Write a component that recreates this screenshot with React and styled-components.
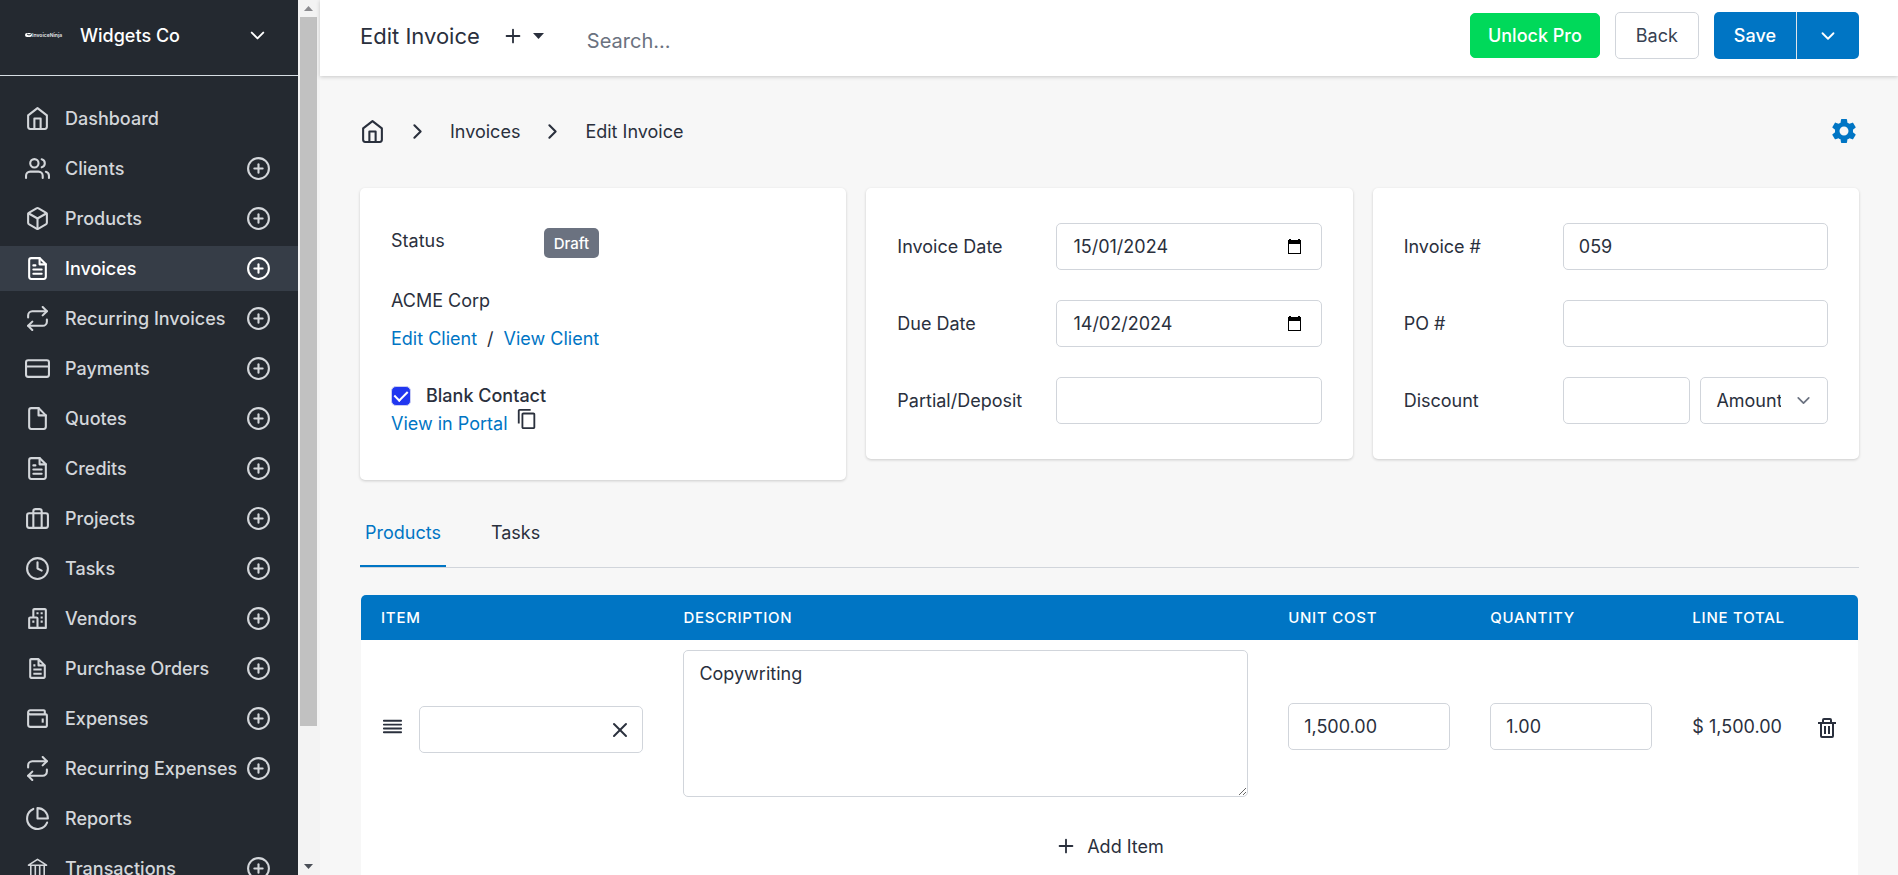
import { useState } from 'react'
import styled, { createGlobalStyle } from 'styled-components'
import {
    FiAlignJustify,
    FiBox,
    FiBriefcase,
    FiChevronDown,
    FiChevronRight,
    FiClock,
    FiCreditCard,
    FiFile,
    FiFileText,
    FiHome,
    FiPieChart,
    FiPlus,
    FiPlusCircle,
    FiRepeat,
    FiUsers,
    FiX,
} from 'react-icons/fi'
import { BiBuildings, BiFile, BiTrash, BiWallet } from 'react-icons/bi'
import { MdContentCopy, MdSettings } from 'react-icons/md'

const GlobalStyle = createGlobalStyle`
    :root {
        --accent: #0075c4;
        --border: #d1d5db;
        --text: #2a303d;
        --page: #f7f7f7;
        --sidebar: #242930;
    }

    * {
        box-sizing: border-box;
    }

    body {
        margin: 0;
        background-color: var(--page);
        color: var(--text);
        font-family: Inter, 'Liberation Sans', sans-serif;
        font-size: 18px;
        line-height: 25px;
    }

    button,
    input,
    select,
    textarea {
        font: inherit;
        color: inherit;
    }

    svg {
        flex-shrink: 0;
    }
`

const Layout = styled.div`
    display: flex;
    height: 100vh;
    overflow: hidden;
`

const Sidebar = styled.aside`
    display: flex;
    flex-direction: column;
    flex: 0 0 298px;
    overflow: hidden;
    background-color: var(--sidebar);
`

const CompanyButton = styled.button`
    display: flex;
    flex-shrink: 0;
    align-items: center;
    gap: 15px;
    height: 76px;
    padding: 0 29px 5px 25px;
    border: 0;
    border-bottom: 1px solid #d6dde3;
    background: none;
    color: white;
    font-weight: 500;
    text-align: left;
    cursor: pointer;
`

const CompanyName = styled.span`
    flex: 1;
`

const Nav = styled.nav`
    display: flex;
    flex-direction: column;
    gap: 5px;
    padding-top: 20px;
`

const NavRow = styled.div`
    display: flex;
    flex-shrink: 0;
    align-items: center;
    justify-content: space-between;
    height: 45px;
    padding: 0 27px 0 25px;
    background-color: ${(props) => (props.$active ? '#363d47' : 'transparent')};
    color: ${(props) => (props.$active ? 'white' : '#d3d6da')};
    font-weight: 500;
`

const NavLink = styled.a`
    display: flex;
    align-items: center;
    gap: 15px;
    color: inherit;
    text-decoration: none;
    white-space: nowrap;
`

const IconButton = styled.button`
    display: inline-flex;
    align-items: center;
    justify-content: center;
    padding: 0;
    border: 0;
    background: none;
    color: ${(props) => props.$color || 'inherit'};
    vertical-align: middle;
    cursor: pointer;
`

const ScrollTrack = styled.div`
    display: flex;
    flex-direction: column;
    flex: 0 0 22px;
    padding: 0 3px 0 2px;
    background-color: #f3f3f3;
`

const ScrollArrow = styled.div`
    display: flex;
    align-items: center;
    justify-content: center;
    height: 17px;
    color: ${(props) => (props.$muted ? '#8b8b8f' : '#4a4f57')};
`

const ScrollSpace = styled.div`
    flex: 1;
`

const ScrollThumb = styled.div`
    flex: 0 0 81%;
    background-color: #c1c1c1;
`

const Main = styled.main`
    display: flex;
    flex-direction: column;
    flex: 1;
    min-width: 0;
`

const TopBar = styled.header`
    display: flex;
    flex-shrink: 0;
    align-items: center;
    height: 76px;
    padding: 0 39px 5px 40px;
    background-color: white;
    box-shadow: 0 1px 4px #00000030;
    z-index: 1;
`

const PageTitle = styled.h1`
    margin: 0;
    font-size: 22px;
    font-weight: 400;
    line-height: 30px;
`

const AddMenuButton = styled(IconButton)`
    gap: 9px;
    margin-left: 22px;
`

const SearchInput = styled.input`
    flex: 1;
    min-width: 0;
    height: 40px;
    margin: 10px 20px 0 43px;
    padding: 0;
    border: 0;
    outline: 0;
    background: none;
    font-size: 20px;

    &::placeholder {
        color: #6b7280;
        opacity: 1;
    }
`

const Actions = styled.div`
    display: flex;
    align-items: center;
    gap: 15px;
`

const Button = styled.button`
    height: ${(props) => (props.$pro ? '45px' : '47px')};
    padding: 0 ${(props) => (props.$pro ? '17px' : '20px')};
    border: 1px solid ${(props) => (props.$pro ? '#00d95a' : 'var(--border)')};
    border-radius: 5px;
    background-color: ${(props) => (props.$pro ? '#00d95a' : 'white')};
    color: ${(props) => (props.$pro ? 'white' : '#374151')};
    font-weight: ${(props) => (props.$pro ? 500 : 400)};
    white-space: nowrap;
    cursor: pointer;
`

const SplitButton = styled.div`
    display: flex;
    height: 47px;
    border-radius: 5px;
    background-color: var(--accent);
    overflow: hidden;
`

const SplitPart = styled.button`
    display: flex;
    align-items: center;
    padding: 0 20px;
    border: 0;
    background: none;
    color: white;
    font-weight: 500;
    cursor: pointer;

    & + & {
        border-left: 1px solid #dfe5ea;
    }
`

const Content = styled.div`
    padding: 40px 39px 0 40px;
`

const Breadcrumbs = styled.nav`
    display: flex;
    align-items: center;
    gap: 20px;
    height: 30px;
    margin-bottom: 42px;
`

const Crumb = styled.a`
    display: flex;
    color: inherit;
    text-decoration: none;
`

const SettingsButton = styled(IconButton)`
    margin-left: auto;
`

const Cards = styled.div`
    display: grid;
    grid-template-columns: repeat(3, minmax(0, 1fr));
    align-items: start;
    gap: 20px;
`

const Card = styled.section`
    display: flex;
    flex-direction: column;
    gap: 30px;
    padding: 35px 31px;
    border-radius: 5px;
    background-color: white;
    box-shadow: 0 1px 3px #0000002e;
`

const ClientCard = styled(Card)`
    gap: 0;
    padding: 40px 31px;
`

const StatusRow = styled.div`
    display: grid;
    grid-template-columns: 9fr 16fr;
    align-items: start;
    margin-bottom: 30px;
`

const Badge = styled.span`
    justify-self: start;
    padding: 3px 10px 2px;
    border-radius: 5px;
    background-color: #6b7280;
    color: white;
    font-size: 15px;
    font-weight: 500;
`

const ClientLinks = styled.div`
    display: flex;
    gap: 10px;
    margin: 13px 0 32px;
`

const TextLink = styled.a`
    color: var(--accent);
    text-decoration: none;
`

const CheckLabel = styled.label`
    display: flex;
    align-items: center;
    gap: 15px;
    font-weight: 500;
`

const Checkbox = styled.input`
    display: grid;
    place-content: center;
    width: 20px;
    height: 20px;
    margin: 0;
    border: 1px solid #c9cdf5;
    border-radius: 5px;
    appearance: none;

    &:checked {
        background-color: #2036f0;
    }

    &:checked::before {
        content: '';
        width: 6px;
        height: 11px;
        margin-bottom: 3px;
        border: solid white;
        border-width: 0 2px 2px 0;
        transform: rotate(45deg);
    }
`

const PortalRow = styled.div`
    display: flex;
    align-items: flex-start;
    gap: 8px;
    line-height: 32px;
`

const FieldRow = styled.div`
    display: grid;
    grid-template-columns: minmax(0, 3fr) minmax(0, 5fr);
    align-items: center;
`

const FieldGroup = styled.div`
    display: grid;
    grid-template-columns: repeat(2, minmax(0, 1fr));
    gap: 10px;
`

const Input = styled.input`
    display: block;
    width: 100%;
    min-width: 0;
    height: 47px;
    padding: 0 15px;
    border: 1px solid var(--border);
    border-radius: 5px;
    outline: 0;
    background-color: white;
`

const InputBox = styled.div`
    display: flex;
    align-items: center;
    flex: 1;
    min-width: 0;
    height: 47px;
    padding-right: ${(props) => props.$end || '10px'};
    border: 1px solid var(--border);
    border-radius: 5px;
    background-color: white;
`

const BareInput = styled.input`
    flex: 1;
    min-width: 0;
    padding: 0 0 0 16px;
    border: 0;
    outline: 0;
    background: none;
`

const SelectBox = styled.div`
    display: flex;
    align-items: center;
    height: 47px;
    padding: 0 13px 0 15px;
    border: 1px solid var(--border);
    border-radius: 5px;
    background-color: white;
    color: #6b7280;
`

const Select = styled.select`
    flex: 1;
    min-width: 0;
    margin-right: 12px;
    padding: 0;
    border: 0;
    outline: 0;
    background: none;
    color: var(--text);
    appearance: none;
    text-overflow: clip;
`

const Tabs = styled.div`
    display: flex;
    gap: 40px;
    margin-top: 20px;
    border-bottom: 1px solid var(--border);
`

const Tab = styled.button`
    height: 67px;
    padding: 0 5px;
    border: 0;
    border-bottom: 2px solid ${(props) => (props.$active ? 'var(--accent)' : 'transparent')};
    background: none;
    color: ${(props) => (props.$active ? 'var(--accent)' : 'inherit')};
    cursor: pointer;
`

const TablePanel = styled.div`
    margin: 27px 1px 0;
    border-radius: 5px 5px 0 0;
    background-color: white;
    overflow: hidden;
`

const Table = styled.table`
    width: 100%;
    border-collapse: collapse;
    table-layout: fixed;
`

const HeadCell = styled.th`
    width: ${(props) => props.$width};
    height: 45px;
    padding: 0 0 0 20px;
    background-color: var(--accent);
    color: white;
    font-size: 15px;
    font-weight: 500;
    letter-spacing: 0.05em;
    text-align: left;
    text-transform: uppercase;
    white-space: nowrap;
`

const Cell = styled.td`
    height: 173px;
    padding: ${(props) => (props.$top ? '10px 20px' : '0 20px')};
    vertical-align: ${(props) => (props.$top ? 'top' : 'middle')};
    white-space: nowrap;
`

const ItemCell = styled.div`
    display: flex;
    align-items: center;
    gap: 15px;
`

const ItemInput = styled(InputBox)`
    margin-top: 6px;
`

const Description = styled.textarea`
    display: block;
    width: 100%;
    height: 147px;
    padding: 10px 15px;
    border: 1px solid var(--border);
    border-radius: 5px;
    outline: 0;
    resize: vertical;
`

const AddItemButton = styled.button`
    display: flex;
    align-items: center;
    justify-content: center;
    gap: 10px;
    width: 100%;
    height: 66px;
    padding: 0;
    border: 0;
    background: none;
    cursor: pointer;
`

const LogoText = styled.text`
    font: 700 5px Inter, 'Liberation Sans', sans-serif;
`

function CompanyLogo() {
    return (
        <svg width='40' height='8' viewBox='0 0 40 8' role='img' aria-label='Invoice Ninja'>
            <rect x='0' y='2' width='7' height='4' rx='2' fill='white' />
            <path d='M2 3l2 1 2-1' fill='none' stroke='#242930' />
            <LogoText x='7' y='6' fill='#d8dade'>
                InvoiceNinja
            </LogoText>
        </svg>
    )
}

function BankIcon({ size }) {
    return (
        <svg width={size} height={size} viewBox='0 0 25 25' fill='none' stroke='currentColor' strokeWidth='1.6' aria-hidden='true'>
            <path d='M3.500 9.200L12.500 3.400L21.500 9.200Z' strokeLinejoin='round' />
            <path d='M5.800 9v10M10.300 9v10M14.700 9v10M19.200 9v10M3 20.500h19' />
        </svg>
    )
}

function Triangle({ up, width = 9, height = 5 }) {
    return (
        <svg width={width} height={height} viewBox='0 0 10 5' preserveAspectRatio='none' aria-hidden='true'>
            <path d={up ? 'M0 5L5 0L10 5Z' : 'M0 0L5 5L10 0Z'} fill='currentColor' />
        </svg>
    )
}

function CalendarIcon() {
    return (
        <svg width='15' height='16' viewBox='0 0 15 16' aria-hidden='true'>
            <path d='M2 0h2v1h7V0h2v1h1v14H1V1h1zM2 5v9h11V5z' fill='black' fillRule='evenodd' />
        </svg>
    )
}

const navItems = [
    { name: 'Dashboard', icon: FiHome, noCreate: true },
    { name: 'Clients', icon: FiUsers },
    { name: 'Products', icon: FiBox },
    { name: 'Invoices', icon: FiFileText, active: true },
    { name: 'Recurring Invoices', icon: FiRepeat },
    { name: 'Payments', icon: FiCreditCard },
    { name: 'Quotes', icon: FiFile },
    { name: 'Credits', icon: FiFileText },
    { name: 'Projects', icon: FiBriefcase },
    { name: 'Tasks', icon: FiClock },
    { name: 'Vendors', icon: BiBuildings },
    { name: 'Purchase Orders', icon: BiFile },
    { name: 'Expenses', icon: BiWallet },
    { name: 'Recurring Expenses', icon: FiRepeat },
    { name: 'Reports', icon: FiPieChart, noCreate: true },
    { name: 'Transactions', icon: BankIcon },
]

function DateField({ id, label, value }) {
    return (
        <FieldRow>
            <label htmlFor={id}>{label}</label>
            <InputBox $end='19px'>
                <BareInput id={id} defaultValue={value} />
                <IconButton aria-label={`Pick ${label}`} $color='black'>
                    <CalendarIcon />
                </IconButton>
            </InputBox>
        </FieldRow>
    )
}

function TextField({ id, label, value = '' }) {
    return (
        <FieldRow>
            <label htmlFor={id}>{label}</label>
            <Input id={id} defaultValue={value} />
        </FieldRow>
    )
}

function SideNavigation() {
    return (
        <Sidebar>
            <CompanyButton>
                <CompanyLogo />
                <CompanyName>Widgets Co</CompanyName>
                <FiChevronDown size={23} />
            </CompanyButton>
            <Nav>
                {navItems.map(({ name, icon: Icon, active, noCreate }) => (
                    <NavRow key={name} $active={active}>
                        <NavLink href='#'>
                            <Icon size={25} />
                            {name}
                        </NavLink>
                        {!noCreate && (
                            <IconButton aria-label={`New ${name}`}>
                                <FiPlusCircle size={25} />
                            </IconButton>
                        )}
                    </NavRow>
                ))}
            </Nav>
        </Sidebar>
    )
}

function Header() {
    return (
        <TopBar>
            <PageTitle>Edit Invoice</PageTitle>
            <AddMenuButton aria-label='Add new'>
                <FiPlus size={22} />
                <Triangle width={11} height={6} />
            </AddMenuButton>
            <SearchInput placeholder='Search...' aria-label='Search' />
            <Actions>
                <Button $pro>Unlock Pro</Button>
                <Button>Back</Button>
                <SplitButton>
                    <SplitPart>Save</SplitPart>
                    <SplitPart aria-label='More actions'>
                        <FiChevronDown size={22} />
                    </SplitPart>
                </SplitButton>
            </Actions>
        </TopBar>
    )
}

function ProductTable() {
    return (
        <TablePanel>
            <Table>
                <thead>
                    <tr>
                        <HeadCell $width='20.2%'>Item</HeadCell>
                        <HeadCell $width='40.4%'>Description</HeadCell>
                        <HeadCell $width='13.5%'>Unit Cost</HeadCell>
                        <HeadCell $width='13.5%'>Quantity</HeadCell>
                        <HeadCell>Line Total</HeadCell>
                        <HeadCell $width='63px' aria-label='Actions' />
                    </tr>
                </thead>
                <tbody>
                    <tr>
                        <Cell>
                            <ItemCell>
                                <FiAlignJustify size={23} />
                                <ItemInput>
                                    <BareInput aria-label='Item' />
                                    <IconButton aria-label='Clear item'>
                                        <FiX size={24} />
                                    </IconButton>
                                </ItemInput>
                            </ItemCell>
                        </Cell>
                        <Cell $top>
                            <Description aria-label='Description' defaultValue='Copywriting' />
                        </Cell>
                        <Cell>
                            <Input aria-label='Unit Cost' defaultValue='1,500.00' />
                        </Cell>
                        <Cell>
                            <Input aria-label='Quantity' defaultValue='1.00' />
                        </Cell>
                        <Cell>$ 1,500.00</Cell>
                        <Cell>
                            <IconButton aria-label='Delete row'>
                                <BiTrash size={24} />
                            </IconButton>
                        </Cell>
                    </tr>
                </tbody>
            </Table>
            <AddItemButton>
                <FiPlus size={22} />
                Add Item
            </AddItemButton>
        </TablePanel>
    )
}

function App() {
    const [tab, setTab] = useState('Products')

    return (
        <>
            <GlobalStyle />
            <Layout>
                <SideNavigation />
                <ScrollTrack aria-hidden='true'>
                    <ScrollArrow $muted>
                        <Triangle up />
                    </ScrollArrow>
                    <ScrollThumb />
                    <ScrollSpace />
                    <ScrollArrow>
                        <Triangle />
                    </ScrollArrow>
                </ScrollTrack>
                <Main>
                    <Header />
                    <Content>
                        <Breadcrumbs aria-label='Breadcrumb'>
                            <Crumb href='#' aria-label='Home'>
                                <FiHome size={25} />
                            </Crumb>
                            <FiChevronRight size={25} />
                            <Crumb href='#'>Invoices</Crumb>
                            <FiChevronRight size={25} />
                            <Crumb href='#'>Edit Invoice</Crumb>
                            <SettingsButton aria-label='Settings' $color='var(--accent)'>
                                <MdSettings size={30} />
                            </SettingsButton>
                        </Breadcrumbs>
                        <Cards>
                            <ClientCard>
                                <StatusRow>
                                    <span>Status</span>
                                    <Badge>Draft</Badge>
                                </StatusRow>
                                <div>ACME Corp</div>
                                <ClientLinks>
                                    <TextLink href='#'>Edit Client</TextLink>
                                    <span>/</span>
                                    <TextLink href='#'>View Client</TextLink>
                                </ClientLinks>
                                <CheckLabel>
                                    <Checkbox type='checkbox' defaultChecked />
                                    Blank Contact
                                </CheckLabel>
                                <PortalRow>
                                    <TextLink href='#'>View in Portal</TextLink>
                                    <IconButton aria-label='Copy link'>
                                        <MdContentCopy size={22} />
                                    </IconButton>
                                </PortalRow>
                            </ClientCard>
                            <Card>
                                <DateField id='date' label='Invoice Date' value='15/01/2024' />
                                <DateField id='due_date' label='Due Date' value='14/02/2024' />
                                <TextField id='partial' label='Partial/Deposit' />
                            </Card>
                            <Card>
                                <TextField id='number' label='Invoice #' value='059' />
                                <TextField id='po_number' label='PO #' />
                                <FieldRow>
                                    <label htmlFor='discount'>Discount</label>
                                    <FieldGroup>
                                        <Input id='discount' />
                                        <SelectBox>
                                            <Select aria-label='Discount type' defaultValue='amount'>
                                                <option value='amount'>Amount</option>
                                                <option value='percent'>Percent</option>
                                            </Select>
                                            <FiChevronDown size={21} />
                                        </SelectBox>
                                    </FieldGroup>
                                </FieldRow>
                            </Card>
                        </Cards>
                        <Tabs role='tablist'>
                            {['Products', 'Tasks'].map((name) => (
                                <Tab key={name} role='tab' aria-selected={tab === name} $active={tab === name} onClick={() => setTab(name)}>
                                    {name}
                                </Tab>
                            ))}
                        </Tabs>
                        <ProductTable />
                    </Content>
                </Main>
            </Layout>
        </>
    )
}

export default App
